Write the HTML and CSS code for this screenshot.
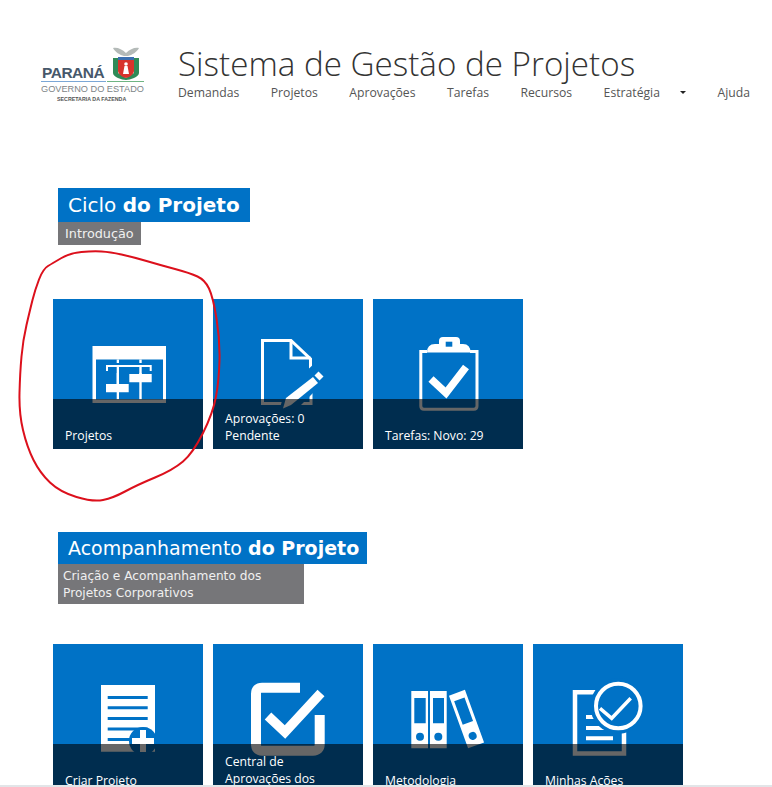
FILE: index.html
```html
<!DOCTYPE html>
<html lang="pt-BR">
  <head>
    <meta charset="UTF-8" />
    <meta name="viewport" content="width=device-width, initial-scale=1.0" />
    <title>Sistema de Gestão de Projetos</title>
    <link rel="stylesheet" href="styles.css">
  </head>
  <body>
    <header class="top">
      <div class="logo">
        <div class="logo-row">
          <span class="logo-name">PARANÁ</span>
          <svg class="logo-arms" viewBox="0 0 28 33">
            <path d="M14 6 C10 2 5 0 1 1 C3 5 8 8 12 9 H16 C20 8 25 5 27 1 C23 0 18 2 14 6Z" fill="#b4bab8" />
            <path d="M1 11 H6 V26 L14 31 L22 26 V11 H27 V26 C27 30 18 33 14 33 C10 33 1 30 1 26Z" fill="#2f8a57" />
            <path d="M6 10 H22 V24 C22 27 18 30 14 31 C10 30 6 27 6 24Z" fill="#d8332c" />
            <path d="M6 10 H22 V13 H6Z" fill="#3b6fb0" />
            <circle cx="14" cy="17" r="1.800" fill="#fff" />
            <path d="M12.500 19 H15.500 L17 27 H11Z" fill="#fff" />
          </svg>
        </div>
        <div class="logo-lines"><span class="logo-line-blue"></span><span class="logo-line-green"></span></div>
        <div class="logo-gov">GOVERNO DO ESTADO</div>
        <div class="logo-sec">SECRETARIA DA FAZENDA</div>
      </div>
      <div class="top-main">
        <h1 class="site-title">Sistema de Gestão de Projetos</h1>
        <nav class="nav">
          <a>Demandas</a>
          <a>Projetos</a>
          <a>Aprovações</a>
          <a>Tarefas</a>
          <a>Recursos</a>
          <a class="nav-drop">Estratégia<i class="caret"></i></a>
          <a>Ajuda</a>
        </nav>
      </div>
    </header>

    <section class="section section-first">
      <h2 class="sec-title">Ciclo <b>do Projeto</b></h2>
      <p class="sec-sub">Introdução</p>
      <div class="tiles">
        <div class="tile">
          <svg class="tile-icon" viewBox="0 0 150 150">
            <path fill="#fff" d="M39.500 47 H113 V104 H39.500Z" />
            <path class="cut" d="M43 60.500 H110 V100.500 H43Z" />
            <path fill="#fff" d="M63.700 60.500 H66 V100.500 H63.700Z M86.300 60.500 H88.700 V100.500 H86.300Z" />
            <path class="cut" d="M51 64 H101 V74 H51Z" />
            <path fill="#fff" d="M53 66 H98.700 V72 H96.700 V68 H55 V72 H53Z" />
            <path fill="#fff" d="M63.700 68 H66 V85 H63.700Z M86.300 68 H88.700 V75 H86.300Z" />
            <path fill="#fff" d="M76.300 75 H98.700 V83.300 H76.300Z M53 85 H75.700 V93.300 H53Z" />
          </svg>
          <div class="tile-bar"><span class="tile-label">Projetos</span></div>
        </div>
        <div class="tile">
          <svg class="tile-icon" viewBox="0 0 150 150">
            <path fill="none" stroke="#fff" stroke-width="3" d="M98 86 V104.500 H49.500 V41.500 H78 L97.500 60 V74" />
            <path fill="none" stroke="#fff" stroke-width="3" d="M78 41.500 V59 H97.500" />
            <path class="cut" d="M66 112 L72 92 L104 62 L118 76 L84 110Z" />
            <path fill="#fff" d="M70 109.500 L73 99 L100 78 L105 84 L78 106Z" />
            <path fill="#fff" d="M101.500 76.500 L105.500 72.500 L110.500 77.500 L106.500 81.500Z" />
          </svg>
          <div class="tile-bar"><span class="tile-label">Aprovações: 0 Pendente</span></div>
        </div>
        <div class="tile">
          <svg class="tile-icon" viewBox="0 0 150 150">
            <path fill="none" stroke="#fff" stroke-width="3" d="M54 52.500 H47.800 V107 Q47.800 110.200 51 110.200 H100.800 Q104 110.200 104 107 V52.500 H97" />
            <path fill="#fff" d="M54 53.500 Q54 45 62 45 H66 V42 Q66 38 70 38 H83 Q87 38 87 42 V45 H90 Q97.500 45 97.500 53.500Z" />
            <path class="cut" d="M72.700 42.700 H79.300 V47.700 H72.700Z" />
            <path fill="none" stroke="#fff" stroke-width="7.500" d="M58 80 L73 94 L93 68" />
          </svg>
          <div class="tile-bar"><span class="tile-label">Tarefas: Novo: 29</span></div>
        </div>
      </div>
    </section>

    <section class="section section-second">
      <h2 class="sec-title">Acompanhamento <b>do Projeto</b></h2>
      <p class="sec-sub sec-sub-wide">Criação e Acompanhamento dos Projetos Corporativos</p>
      <div class="tiles">
        <div class="tile">
          <svg class="tile-icon" viewBox="0 0 150 150">
            <path fill="#fff" d="M48 41 H102 V107.700 H48Z" />
            <path class="cut" d="M54.700 52 H94.700 V55 H54.700Z M54.700 62.200 H94.700 V65.200 H54.700Z M54.700 73 H94.700 V76 H54.700Z M54.700 83.500 H94.700 V86.500 H54.700Z M54.700 94 H94.700 V97 H54.700Z" />
            <circle class="cut" cx="90" cy="97" r="14" />
            <path fill="#fff" d="M87 86 H93 V94 H101 V100 H93 V108 H87 V100 H79 V94 H87Z" />
          </svg>
          <div class="tile-bar"><span class="tile-label">Criar Projeto</span></div>
        </div>
        <div class="tile">
          <svg class="tile-icon" viewBox="0 0 150 150">
            <path fill="none" stroke="#fff" stroke-width="10" d="M87 43.700 H49 Q43 43.700 43 50 V100 Q43 106.700 49 106.700 H100 Q106.700 106.700 106.700 100 V71" />
            <path fill="none" stroke="#fff" stroke-width="9.500" d="M55 72 L72 88 L108 49" />
          </svg>
          <div class="tile-bar"><span class="tile-label tile-label-long">Central de Aprovações dos</span></div>
        </div>
        <div class="tile">
          <svg class="tile-icon" viewBox="0 0 150 150">
            <path fill="#fff" fill-rule="evenodd" d="M38.300 47 H55 V104.300 H38.300Z M41.300 54 V79.300 H52.700 V54Z" />
            <circle class="cut" cx="47" cy="92.700" r="4" />
            <path fill="#fff" fill-rule="evenodd" d="M57 47 H73.700 V104.300 H57Z M60 54 V79.300 H71 V54Z" />
            <circle class="cut" cx="65.300" cy="92.700" r="4" />
            <g transform="rotate(-20 93.600 75)">
              <path fill="#fff" fill-rule="evenodd" d="M85 47 H102 V103 H85Z M88 54 V79 H99 V54Z" />
              <circle class="cut" cx="93.500" cy="93" r="4" />
            </g>
          </svg>
          <div class="tile-bar"><span class="tile-label">Metodologia</span></div>
        </div>
        <div class="tile">
          <svg class="tile-icon" viewBox="0 0 150 150">
            <path fill="none" stroke="#fff" stroke-width="4.500" d="M42 48.200 H91 V109.500 H42Z" />
            <path fill="none" stroke="#fff" stroke-width="4" d="M53 73 H62 M53 84 H80 M53 94.300 H80" />
            <circle class="cut" cx="85.300" cy="62" r="28" />
            <circle fill="none" stroke="#fff" stroke-width="4" cx="85.300" cy="62" r="22.300" />
            <path fill="none" stroke="#fff" stroke-width="3.500" d="M67 64.300 L78.700 74.300 L97.700 54.300" />
          </svg>
          <div class="tile-bar"><span class="tile-label">Minhas Ações</span></div>
        </div>
      </div>
    </section>

    <svg class="scribble" viewBox="0 0 240 520">
      <path d="M101.500 251.500 Q93 251 81.500 252 Q70 253 61.500 258 Q53 263 48 266 Q43 269 39 279.500 Q35 290 32.500 300 Q30 310 26.500 325 Q23 340 21.500 356.500 Q20 373 19.500 393 Q19 413 23 430 Q27 447 33.500 460 Q40 473 50 482.500 Q60 492 76.500 497 Q93 502 103 500 Q113 498 125 491.500 Q137 485 155 477.500 Q173 470 183 461.500 Q193 453 203 433 Q213 413 216 396.500 Q219 380 219.500 360 Q220 340 216.500 318.500 Q213 297 209 288.500 Q205 280 197.500 276.500 Q190 273 175 269 Q160 265 146.500 261 Q133 257 121.500 254.500 Q110 252 101.500 251.500Z" />
    </svg>
    <div class="page-edge"></div>
  </body>
</html>
```

FILE: styles.css
```css
html, body {
  margin: 0;
  height: 787px;
  overflow: hidden;
  background: #fff;
}

body {
  position: relative;
  font-family: "Open Sans", "Liberation Sans", sans-serif;
}

.top {
  display: flex;
  padding: 47px 0 0 40px;
  height: 141px;
  box-sizing: border-box;
}

.logo {
  width: 105px;
  margin-right: 33px;
  color: #7d8487;
}

.logo-row {
  display: flex;
  align-items: flex-end;
  justify-content: space-between;
  height: 33px;
  padding: 0 5px 0 2px;
}

.logo-name {
  font-family: "Liberation Sans", sans-serif;
  font-weight: bold;
  font-size: 15.500px;
  letter-spacing: -0.500px;
  line-height: 15px;
  color: #47586a;
}

.logo-arms {
  width: 28px;
  height: 33px;
}

.logo-lines {
  display: flex;
  gap: 1px;
  margin-top: 1px;
  padding-left: 1px;
}

.logo-line-blue {
  width: 65px;
  height: 1px;
  background: #7ba7d6;
}

.logo-line-green {
  width: 37px;
  height: 1px;
  background: #6fb583;
}

.logo-gov {
  margin: 2px 0 0 1px;
  font-family: "Liberation Sans", sans-serif;
  font-size: 9.200px;
  line-height: 11px;
  white-space: nowrap;
}

.logo-sec {
  margin: 1px 0 0 17px;
  font-family: "Liberation Sans", sans-serif;
  font-weight: bold;
  font-size: 5.300px;
  line-height: 6px;
  white-space: nowrap;
  color: #555;
}

.site-title {
  margin: -1px 0 0;
  font-weight: 300;
  font-size: 33.200px;
  line-height: 36px;
  color: #333;
  white-space: nowrap;
}

.nav {
  display: flex;
  gap: 31.500px;
  margin-top: 2px;
  font-size: 12.200px;
  line-height: 17px;
  color: #555;
  white-space: nowrap;
}

.nav-drop {
  display: flex;
  align-items: center;
}

.caret {
  width: 0;
  height: 0;
  margin-left: 20px;
  border: 3px solid transparent;
  border-top-color: #222;
  border-bottom: 0;
}

.section {
  padding-left: 58px;
}

.section-first {
  padding-top: 47px;
  height: 391px;
  box-sizing: border-box;
}

.sec-title {
  display: table;
  margin: 0;
  padding: 0 10px;
  background: #0072c6;
  color: #fff;
  font-family: "DejaVu Sans", sans-serif;
  font-weight: normal;
  font-size: 20px;
  line-height: 34px;
}

.sec-sub {
  display: table;
  margin: 0;
  padding: 0 7px;
  background: #767679;
  color: #f0f0f0;
  font-family: "DejaVu Sans", sans-serif;
  font-size: 12.800px;
  line-height: 23px;
}

.sec-sub-wide {
  width: 246px;
  box-sizing: border-box;
  padding: 4px 5px 3px;
  font-size: 12.200px;
  line-height: 16.500px;
}

.section-second .sec-title {
  padding-right: 8px;
  font-size: 19px;
  line-height: 32px;
}

.tiles {
  display: flex;
  gap: 10px;
  margin: 54px 0 0 -5px;
}

.section-second .tiles {
  margin-top: 40px;
}

.tile {
  position: relative;
  width: 150px;
  height: 150px;
  flex: none;
  background: #0072c6;
  overflow: hidden;
}

.tile-icon {
  display: block;
  width: 150px;
  height: 150px;
}

.cut {
  fill: #0072c6;
}

.tile-bar {
  position: absolute;
  left: 0;
  right: 0;
  bottom: 0;
  height: 50px;
  display: flex;
  align-items: flex-end;
  padding: 0 12px 5px;
  box-sizing: border-box;
  background: rgba(0, 0, 0, 0.6);
}

.tile-label {
  font-size: 12.200px;
  line-height: 17px;
  color: #fff;
}

.tile-label-long {
  margin-bottom: 2px;
}

.scribble {
  position: absolute;
  left: 0;
  top: 0;
  width: 240px;
  height: 520px;
  pointer-events: none;
}

.scribble path {
  fill: none;
  stroke: #dc101c;
  stroke-width: 2;
}

.page-edge {
  position: absolute;
  left: 0;
  right: 0;
  bottom: 0;
  height: 2px;
  background: #e2e5e8;
}
```
